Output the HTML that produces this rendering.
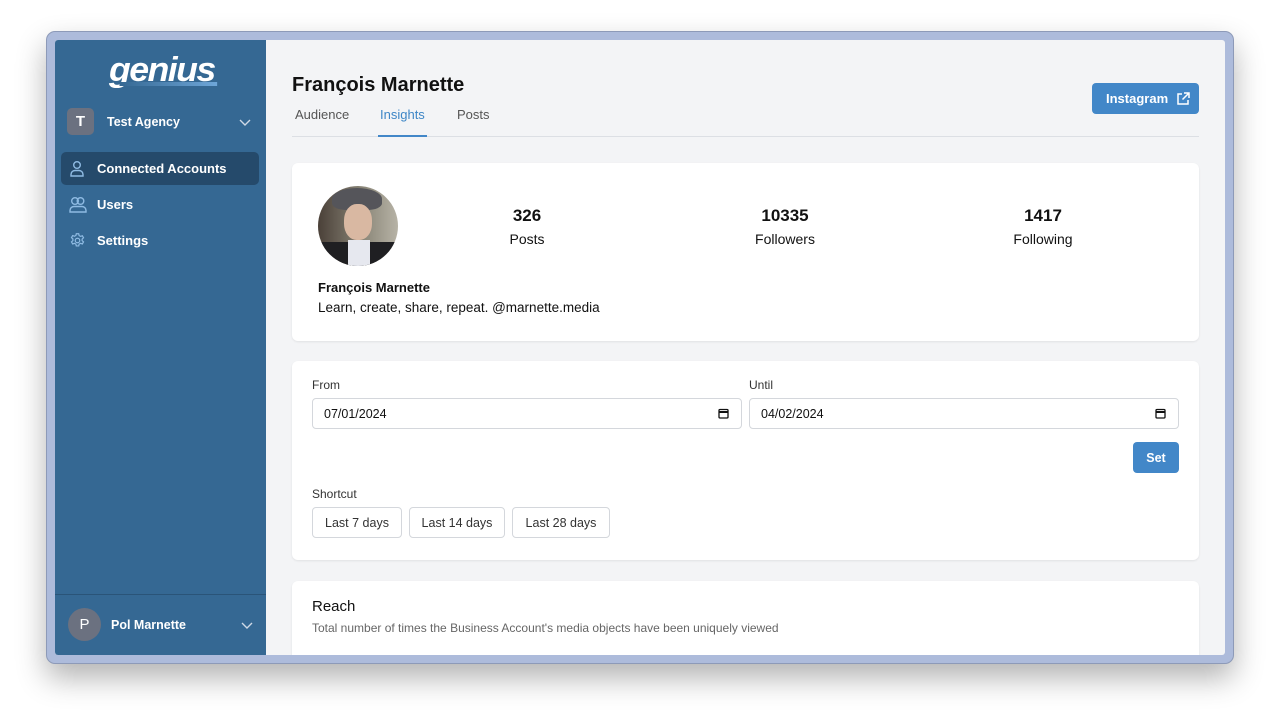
<!DOCTYPE html>
<html><head><meta charset="utf-8"><style>
*{box-sizing:border-box;margin:0;padding:0}
body{width:1280px;height:725px;background:#fff;font-family:"Liberation Sans",sans-serif;position:relative;overflow:hidden}
.frame{position:absolute;left:46px;top:31px;width:1188px;height:633px;background:#adbbdb;border:1px solid #8d9ab8;border-radius:9px;box-shadow:0 14px 30px rgba(0,0,0,.3)}
.win{position:absolute;left:8px;top:8px;width:1170px;height:615px;background:#f3f4f6;overflow:hidden;border-radius:3px}
.side{position:absolute;left:0;top:0;width:211px;height:100%;background:#356893;color:#fff}
.logo{position:absolute;left:54px;top:11px;font:italic bold 34px "Liberation Sans",sans-serif;letter-spacing:-1.5px;color:#fff;transform:scaleX(1.05);transform-origin:left}
.logo:after{content:"";position:absolute;left:10px;right:-2px;top:31px;height:4px;background:linear-gradient(90deg,#356893,#6ea6d8)}
.agency{position:absolute;left:12px;top:68px;display:flex;align-items:center;width:186px}
.sq{width:27px;height:27px;border-radius:5px;background:#6b7180;display:flex;align-items:center;justify-content:center;font-weight:bold;font-size:15px}
.chev{position:absolute;right:2px;top:11px}
.nav{position:absolute;left:6px;width:198px;height:33px;border-radius:5px;display:flex;align-items:center;padding-left:36px;font-size:13px;font-weight:bold}
.nav svg{position:absolute;left:8px;top:8px}
.active{background:#254a6b}
.foot{position:absolute;left:0;bottom:0;width:211px;height:61px;border-top:1px solid #2a5478}
.circ{position:absolute;left:13px;top:13px;width:33px;height:33px;border-radius:50%;background:#6b7180;display:flex;align-items:center;justify-content:center;font-size:15px}
.main{position:absolute;left:211px;top:0;right:0;bottom:0}
h1{position:absolute;left:26px;top:34px;font-size:20px;font-weight:bold;color:#111}
.tabs{position:absolute;left:26px;top:64px;right:26px;height:33px;border-bottom:1px solid #dcdfe4;font-size:13px;color:#555}
.tabs span{position:absolute;top:3px}
.ig{position:absolute;right:26px;top:43px;width:107px;height:31px;background:#4287c8;border-radius:4px;color:#fff;font-size:13px;font-weight:bold;display:flex;align-items:center;padding-left:14px}
.card{position:absolute;left:26px;right:26px;background:#fff;border-radius:6px;box-shadow:0 1px 2px rgba(0,0,0,.08)}
.stat{position:absolute;top:43px;width:120px;text-align:center;color:#111}
.stat b{display:block;font-size:17px}
.stat span{display:block;font-size:14px;margin-top:5px}
.lbl{position:absolute;font-size:12px;color:#333}
.inp{position:absolute;top:37px;height:31px;border:1px solid #d4d7dc;border-radius:4px;font-size:12.5px;padding:8px 11px;color:#111}
.inp svg{position:absolute;right:12px;top:9px}
.btn{position:absolute;top:146px;height:31px;border:1px solid #d4d7dc;border-radius:4px;font-size:12.5px;color:#333;display:flex;align-items:center;justify-content:center}
</style></head><body>
<div class="frame"><div class="win">
<div class="side">
<div class="logo">genius</div>
<div class="agency"><div class="sq">T</div><span style="margin-left:13px;font-size:12.5px;font-weight:bold">Test Agency</span>
<svg class="chev" width="12" height="8" viewBox="0 0 12 8"><path d="M1 1l5 5 5-5" stroke="#cfd9e6" stroke-width="1.4" fill="none"/></svg></div>
<div class="nav active" style="top:112px"><svg width="16" height="17" viewBox="0 0 16 17" fill="none" stroke="#8fbbe3" stroke-width="1.4"><circle cx="8" cy="5" r="3.3"/><path d="M2 16v-1.5a4 4 0 014-4h4a4 4 0 014 4V16z"/></svg>Connected Accounts</div>
<div class="nav" style="top:148px"><svg width="18" height="17" viewBox="0 0 18 17" fill="none" stroke="#8fbbe3" stroke-width="1.4"><circle cx="6" cy="5" r="3.3"/><circle cx="11.5" cy="5" r="3.3"/><path d="M1 16v-1.5a4 4 0 014-4h8a4 4 0 014 4V16z"/></svg>Users</div>
<div class="nav" style="top:184px"><svg width="17" height="17" viewBox="0 0 24 24" fill="none" stroke="#8fbbe3" stroke-width="1.7"><path d="M10.3 2.5h3.4l.6 2.6 2 1.1 2.5-.9 1.7 2.9-2 1.8v2.2l2 1.8-1.7 2.9-2.5-.9-2 1.1-.6 2.6h-3.4l-.6-2.6-2-1.1-2.5.9-1.7-2.9 2-1.8V9.8l-2-1.8 1.7-2.9 2.5.9 2-1.1z"/><circle cx="12" cy="12" r="3.2"/></svg>Settings</div>
<div class="foot"><div class="circ">P</div><span style="position:absolute;left:56px;top:23px;font-size:12.5px;font-weight:bold">Pol Marnette</span>
<svg style="position:absolute;left:186px;top:27px" width="12" height="8" viewBox="0 0 12 8"><path d="M1 1l5 5 5-5" stroke="#cfd9e6" stroke-width="1.4" fill="none"/></svg></div>
</div>
<div class="main">
<h1>François Marnette</h1>
<div class="tabs"><span style="left:3px">Audience</span><span style="left:88px;color:#3d86c6">Insights</span><span style="left:165px">Posts</span>
<div style="position:absolute;left:86px;width:49px;bottom:-1px;height:2px;background:#4287c8"></div></div>
<div class="ig">Instagram<svg style="margin-left:8px" width="14" height="14" viewBox="0 0 14 14" fill="none" stroke="#fff" stroke-width="1.5"><path d="M6 2H2v10h10V8M8 1h5v5M13 1L6.5 7.5"/></svg></div>
<div class="card" style="top:123px;height:178px">
<div style="position:absolute;left:26px;top:23px;width:80px;height:80px;border-radius:50%;overflow:hidden;background:linear-gradient(90deg,#4a4038,#8e8a7c 60%,#b7b3a6)">
<div style="position:absolute;left:14px;top:2px;width:50px;height:22px;border-radius:50% 50% 30% 30%;background:#55555a"></div>
<div style="position:absolute;left:26px;top:18px;width:28px;height:36px;border-radius:45%;background:#d9b8a2"></div>
<div style="position:absolute;left:0;top:56px;width:80px;height:30px;background:#1f1f22"></div>
<div style="position:absolute;left:30px;top:54px;width:22px;height:30px;background:#e6e8ef"></div>
</div>
<div class="stat" style="left:175px"><b>326</b><span>Posts</span></div>
<div class="stat" style="left:433px"><b>10335</b><span>Followers</span></div>
<div class="stat" style="left:691px"><b>1417</b><span>Following</span></div>
<div style="position:absolute;left:26px;top:117px;font-size:13px;font-weight:bold;color:#111">François Marnette</div>
<div style="position:absolute;left:26px;top:137px;font-size:13.5px;color:#111">Learn, create, share, repeat. @marnette.media</div>
</div>
<div class="card" style="top:321px;height:199px">
<div class="lbl" style="left:20px;top:17px">From</div>
<div class="inp" style="left:20px;width:430px">07/01/2024<svg width="11" height="11" viewBox="0 0 11 11" fill="none" stroke="#111" stroke-width="1.3"><rect x="1" y="1.5" width="9" height="8.5" rx="1"/><path d="M1 4h9" stroke-width="2"/></svg></div>
<div class="lbl" style="left:457px;top:17px">Until</div>
<div class="inp" style="left:457px;width:430px">04/02/2024<svg width="11" height="11" viewBox="0 0 11 11" fill="none" stroke="#111" stroke-width="1.3"><rect x="1" y="1.5" width="9" height="8.5" rx="1"/><path d="M1 4h9" stroke-width="2"/></svg></div>
<div style="position:absolute;left:841px;top:81px;width:46px;height:31px;background:#4287c8;border-radius:4px;color:#fff;font-size:12.5px;font-weight:bold;display:flex;align-items:center;justify-content:center">Set</div>
<div class="lbl" style="left:20px;top:126px">Shortcut</div>
<div class="btn" style="left:20px;width:90px">Last 7 days</div>
<div class="btn" style="left:117px;width:96px">Last 14 days</div>
<div class="btn" style="left:220px;width:98px">Last 28 days</div>
</div>
<div class="card" style="top:541px;height:90px">
<div style="position:absolute;left:20px;top:17px;font-size:15px;color:#111">Reach</div>
<div style="position:absolute;left:20px;top:40px;font-size:12px;color:#666">Total number of times the Business Account's media objects have been uniquely viewed</div>
</div>
</div>
</div></div>
</body></html>
